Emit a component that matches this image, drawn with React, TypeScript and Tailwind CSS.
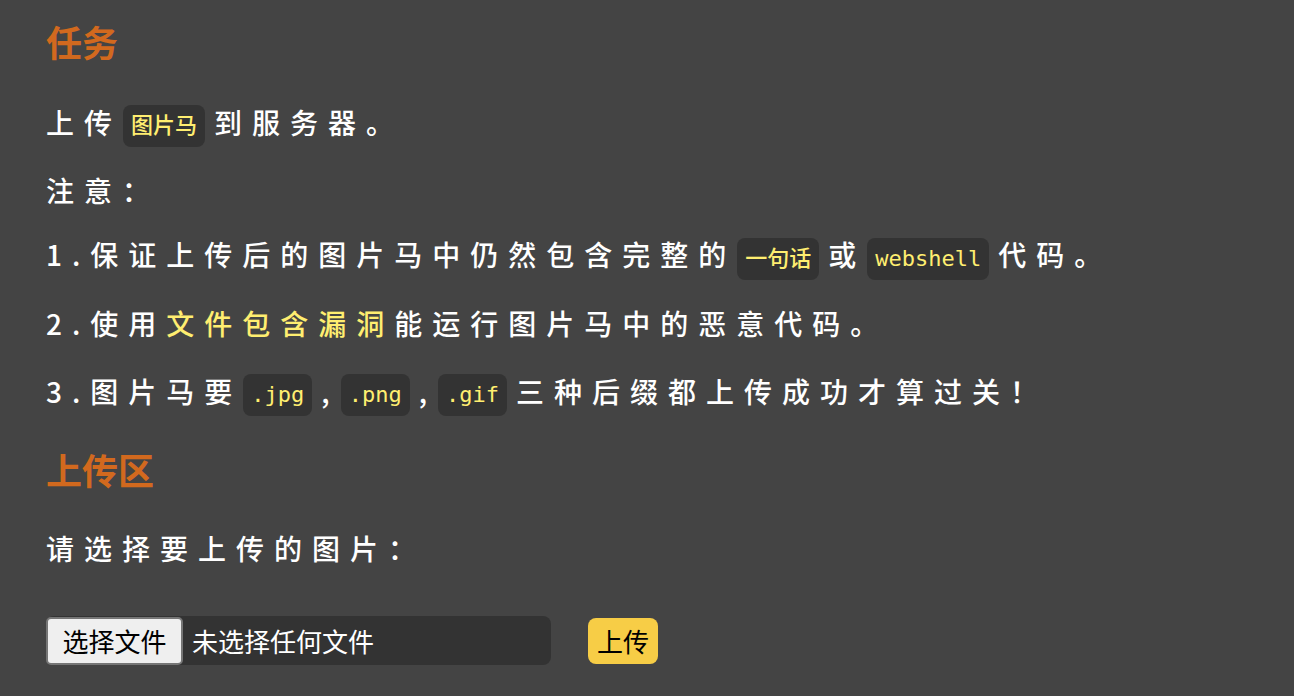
export default function App() {
  const chip =
    "inline-block align-middle h-[42px] leading-[42px] px-2 ml-[1px] mr-[9px] rounded-lg bg-[#333333] text-[#ffee70] text-[22px] tracking-normal font-['DejaVu_Sans_Mono','Noto_Sans_CJK_SC',monospace]";
  const line = "leading-[42px] mb-[22px]";

  return (
    <div className="min-h-screen bg-[#444444] text-white font-['Noto_Sans_CJK_SC','Noto_Sans',sans-serif] pl-[46px] pt-[19px]">
      <h2 className="text-[36px] leading-[44px] font-bold text-[#d2691e] mb-[38px]">任务</h2>

      <div className="text-[28px] tracking-[10px] font-medium">
        <p className={line}>
          上传<span className={chip}>图片马</span>到服务器。
        </p>
        <p className={line}>注意：</p>
        <p className={line}>
          1.保证上传后的图片马中仍然包含完整的<span className={chip}>一句话</span>或<span className={chip}>webshell</span>代码。
        </p>
        <p className="leading-[42px] mb-[26px]">
          2.使用<span className="text-[#ffee70]">文件包含漏洞</span>能运行图片马中的恶意代码。
        </p>
        <p className="leading-[42px] mb-[31px]">
          3.图片马要<span className={chip}>.jpg</span>,<span className={chip}>.png</span>,<span className={chip}>.gif</span>三种后缀都上传成功才算过关！
        </p>
      </div>

      <h2 className="text-[36px] leading-[44px] font-bold text-[#d2691e] mb-[36px]">上传区</h2>

      <p className="text-[28px] tracking-[10px] font-medium leading-[42px] mb-[47px]">请选择要上传的图片：</p>

      <form className="flex items-center gap-[37px]" onSubmit={(e) => e.preventDefault()}>
        <label className="flex items-center w-[505px] h-[49px] rounded-lg bg-[#333333] cursor-pointer">
          <input type="file" className="hidden" />
          <span className="flex items-center justify-center w-[137px] h-[48px] rounded-[5px] border-2 border-[#767676] bg-[#efefef] text-black text-[26px]">
            选择文件
          </span>
          <span className="ml-[9px] text-[26px] text-white">未选择任何文件</span>
        </label>
        <button
          type="submit"
          className="w-[70px] h-[46px] rounded-lg bg-[#f7cd46] text-black text-[26px] leading-none"
        >
          上传
        </button>
      </form>
    </div>
  );
}
